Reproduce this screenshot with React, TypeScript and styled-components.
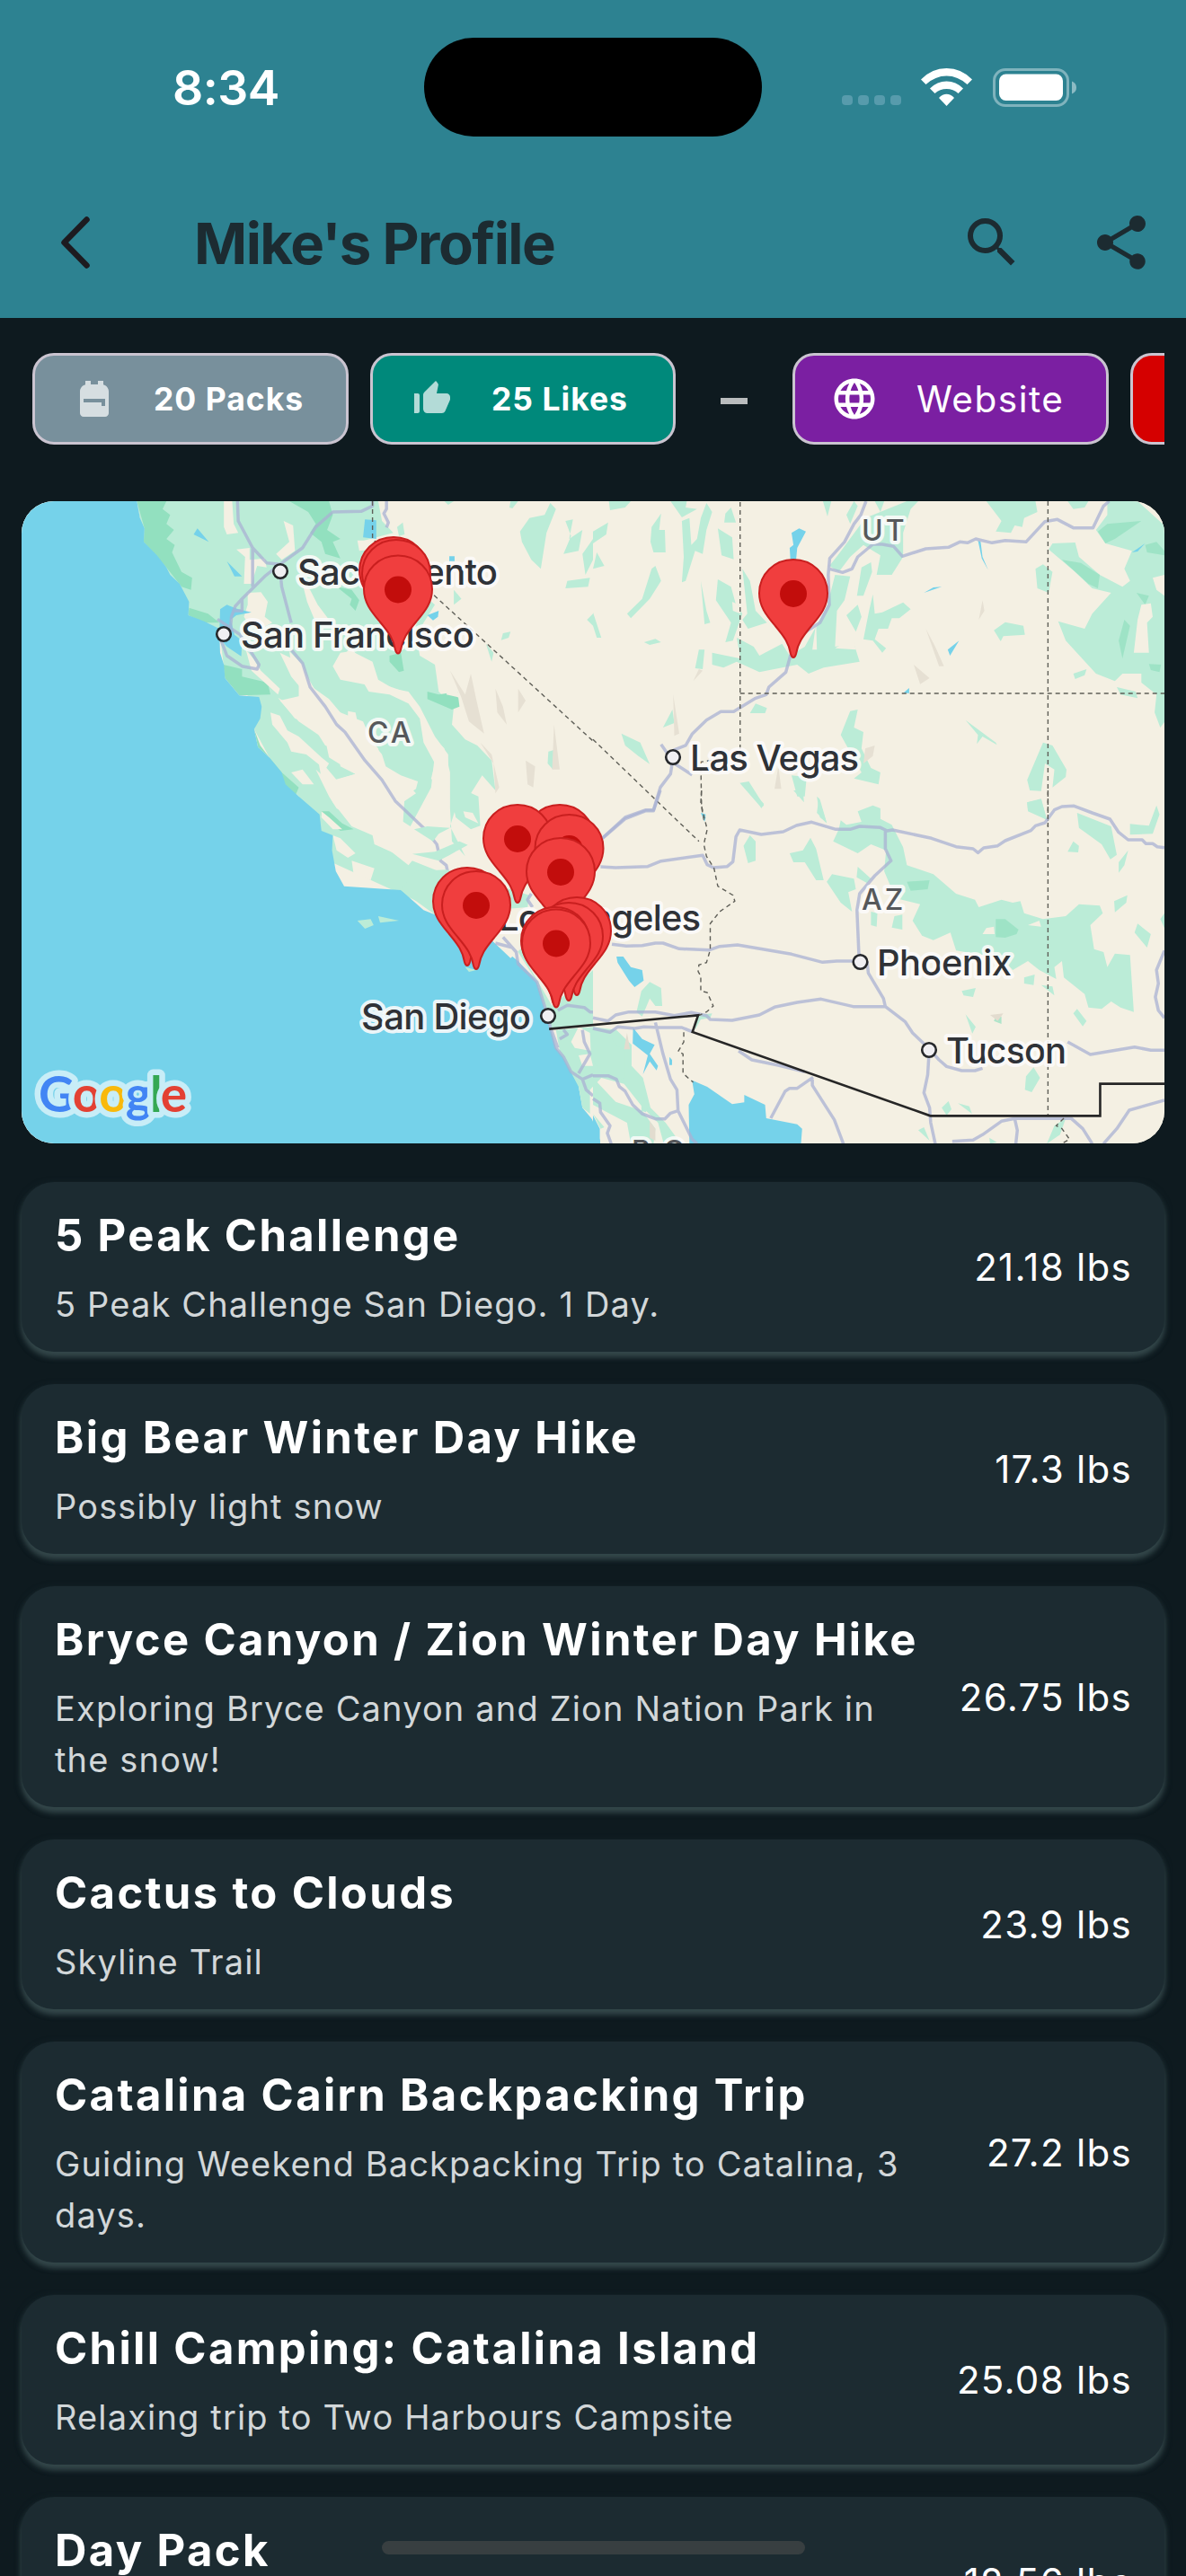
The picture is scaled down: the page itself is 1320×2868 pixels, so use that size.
import React, { FC, ReactNode } from "react"
import styled, { createGlobalStyle } from "styled-components"
import { MdBackpack, MdLanguage, MdSearch, MdShare, MdThumbUpAlt } from "react-icons/md"

const GlobalStyle = createGlobalStyle`
  * {
    box-sizing: border-box;
  }

  body {
    margin: 0;
    background: #0e1a1f;
    font-family: Inter, "Liberation Sans", sans-serif;
  }

  p, h1, h2 {
    margin: 0;
  }
`

const Screen = styled.div`
  position: relative;
  width: 1320px;
  height: 2868px;
  overflow: hidden;
  background: #0e1a1f;
`

const Header = styled.header`
  height: 354px;
  background: #2d8291;
`

const StatusBar = styled.div`
  display: grid;
  grid-template-columns: 472px 376px 1fr;
  height: 186px;
  padding-top: 42px;
`

const Clock = styled.div`
  height: 110px;
  padding: 1px 0 0 192px;
  line-height: 110px;
  font-size: 53.5px;
  font-weight: 570;
  letter-spacing: -0.5px;
  color: #fff;
`

const Island = styled.div`
  height: 110px;
  border-radius: 55px;
  background: #000;
`

const Indicators = styled.div`
  display: flex;
  align-items: center;
  height: 110px;
  padding-left: 89px;
`

const SignalDots = styled.div`
  display: flex;
  gap: 6.5px;
  margin-top: 29px;
  margin-right: 22px;
`

const SignalDot = styled.span`
  width: 11.5px;
  height: 11px;
  border-radius: 4px;
  background: #579bac;
`

const AppBar = styled.div`
  display: flex;
  align-items: center;
  height: 168px;
  padding: 0 36px 0 64px;
  color: #1c2b31;
`

const AppBarTitle = styled.h1`
  flex: 1;
  margin-left: 112px;
  padding-top: 2px;
  font-size: 63.5px;
  font-weight: 700;
  letter-spacing: -1.5px;
  line-height: 84px;
`

const Actions = styled.div`
  display: flex;
  gap: 72px;
`

const ChipRow = styled.div`
  display: flex;
  align-items: center;
  height: 204px;
  margin-right: 24px;
  padding: 0 0 24px 36px;
  overflow: hidden;
`

const Chip = styled.div<{ $color: string; $width: number; $pad?: number }>`
  display: flex;
  flex-shrink: 0;
  align-items: center;
  gap: 42px;
  width: ${({ $width }) => $width}px;
  height: 102px;
  margin-right: 24px;
  padding-left: ${({ $pad }) => $pad ?? 42}px;
  border: 3px solid #cac4d0;
  border-radius: 24px;
  background: ${({ $color }) => $color};
  color: #fff;

  svg {
    flex-shrink: 0;
  }
`

const ChipLabel = styled.span<{ $large?: boolean }>`
  font-size: ${({ $large }) => ($large ? 40.5 : 35.5)}px;
  font-weight: ${({ $large }) => ($large ? 430 : 650)};
  letter-spacing: ${({ $large }) => ($large ? 1.5 : 1)}px;
  white-space: nowrap;
`

const Divider = styled.div`
  flex-shrink: 0;
  width: 30px;
  height: 7px;
  margin: 4px 50px 0 26px;
  background: #b9bcbd;
`

const MapCard = styled.div`
  height: 715px;
  margin: 0 24px 43px;
  border-radius: 36px;
  overflow: hidden;
  background: #f4f0e3;

  svg {
    display: block;
  }
`

const List = styled.div`
  display: flex;
  flex-direction: column;
  gap: 36px;
  padding: 0 24px;
`

const PackCard = styled.div`
  display: flex;
  align-items: center;
  gap: 40px;
  flex-shrink: 0;
  padding: 24px 36px 24px 37px;
  border-radius: 36px;
  background: #1c2b31;
  box-shadow: 0 6px 6px #34474a, 0 3px 9px #1e2f34;
`

const PackInfo = styled.div`
  flex: 1;
  min-width: 0;
`

const PackTitle = styled.h2`
  margin-bottom: 12px;
  font-size: 49px;
  font-weight: 700;
  letter-spacing: 2.35px;
  line-height: 72px;
  white-space: nowrap;
  color: #fff;
`

const PackNote = styled.p`
  max-width: 960px;
  font-size: 38px;
  line-height: 57px;
  letter-spacing: 1.15px;
  color: #d2d7d9;
`

const PackWeight = styled.span`
  font-size: 42px;
  font-weight: 430;
  letter-spacing: 1.3px;
  white-space: nowrap;
  color: #fff;
`

const HomeIndicator = styled.div`
  position: absolute;
  bottom: 24px;
  left: 425px;
  width: 471px;
  height: 15px;
  border-radius: 8px;
  background: #383f41;
`

const WATER = "#75d2ea"
const GREEN = "#bbecd7"
const FOREST = "#92e0bf"
const LAND = "#f4f0e3"

// The map is traced in four quarters, each one with its own grid of units.
const Quarter: FC<{ x: number; y: number; children: ReactNode }> = ({ x, y, children }) => (
  <g transform={`translate(${x} ${y}) scale(0.42092 0.33333)`}>{children}</g>
)

const Road: FC<{ d: string }> = ({ d }) => (
  <path d={d} fill="none" stroke="#a9b2d3" strokeOpacity={0.75} strokeWidth={3.5} strokeLinejoin="round" vectorEffect="non-scaling-stroke" />
)

const Border: FC<{ d: string }> = ({ d }) => (
  <path d={d} fill="none" stroke="#5f5f58" strokeWidth={1.4} strokeDasharray="5 4" vectorEffect="non-scaling-stroke" />
)

const cities = [
  { name: "Sacramento", x: 331, y: 651, width: 223, dot: [312, 636] },
  { name: "San Francisco", x: 268, y: 721, width: 260, dot: [249, 706] },
  { name: "Las Vegas", x: 768, y: 858, width: 188, dot: [749, 843] },
  { name: "Los Angeles", x: 555, y: 1036, width: 225 },
  { name: "Phoenix", x: 976, y: 1086, width: 150, dot: [957.5, 1071] },
  { name: "San Diego", x: 402, y: 1146, width: 189, dot: [610, 1131] },
  { name: "Tucson", x: 1053, y: 1184, width: 134, dot: [1034, 1169] },
]

const states = [
  { name: "CA", x: 409, y: 827 },
  { name: "UT", x: 959, y: 602 },
  { name: "AZ", x: 959, y: 1013 },
  { name: "B.C.", x: 703, y: 1293 },
]

const pins = [
  [438, 597], [441, 600], [443, 617.5], [883, 622],
  [623, 895], [576, 895], [633.5, 906], [624, 932],
  [520, 965], [530, 969],
  [642, 998], [633, 1004], [618, 1009], [619, 1011.5],
]

const logo = [
  ["G", "#4285f4"], ["o", "#e34133"], ["o", "#f9b90b"], ["g", "#4285f4"], ["l", "#34a853"], ["e", "#e34133"],
]

const TripMap: FC = () => (
  <svg width={1272} height={715} viewBox="24 558 1272 715">
    <rect x={24} y={558} width={1272} height={715} fill={LAND} />

    {/* north west: the bay, the valley and the Sierra */}
    <Quarter x={0} y={540}>
      <path fill={GREEN} d="M362 54H1000L1010 120L1040 160L950 190L1000 240L1150 400L1100 500L1110 570L1150 600L1160 690L1200 740L1195 800L1230 850L1262 870L1300 920L1310 1020L1275 970L1235 1050L1205 1080L1190 1140L1230 1240L1195 1190L1190 1080L1190 960L1175 880L1130 820L1100 760L1070 690L1000 660L960 610L930 540L880 605L900 650L1100 700L1120 830L1150 900L1140 1010L1085 1140L1060 1120L1065 1060L1100 1030L1070 990L1010 940L1000 880L960 820L900 760L860 720L840 700L790 590L740 560L770 640L810 700L740 720L790 790L860 850L870 910L940 965L890 985L840 910L850 980L880 1060L930 1140L985 1170L990 1200L1060 1240L1160 1290L1190 1440L860 1250L790 1040L755 1000L712 910L672 815L692 740L595 645L580 480L498 435L380 190Z" />
      <path fill={FOREST} d="M362 54H440L430 80L450 100L440 130L460 150L440 180L462 200L455 225L480 290L508 310L505 350L480 340L440 275L380 190L382 145ZM765 54H870L880 100L865 150L900 180L880 190L900 245L860 230L850 190L820 160L835 130L815 90ZM590 600L640 615L640 640L708 660L715 700L633 703L595 645ZM672 815L688 870L712 910L745 960L790 1010L780 1040L740 980L712 910L682 875ZM890 340L930 350L950 385L940 420L925 400L930 380ZM1030 570L1060 560L1068 620L1055 625L1030 590ZM1130 690L1160 700L1210 690L1215 740L1195 750L1130 715ZM850 1090L870 1090L905 1130L935 1150L900 1155L850 1105ZM500 410L550 430L580 460L540 460L498 435Z" />
      <path fill={LAND} d="M592 54H614L618 130L630 160L600 165L592 140ZM750 120L775 135L780 220L745 250L730 230L765 190ZM625 215L660 210L660 250L700 245L705 275L680 270L665 330L645 330L648 240ZM945 185L980 185L985 215L950 220ZM655 360L690 358L708 390L700 440L720 460L690 480L655 460L645 440L655 400ZM800 330L820 350L840 400L870 450L830 445L812 390ZM650 550L670 580L690 620L740 680L735 700L700 660L665 620ZM765 555L800 600L820 670L870 715L900 760L960 790L985 860L1010 900L1020 940L1060 970L1105 990L1100 1015L1070 1040L1065 1140L1050 1140L1020 1170L1100 1240L1080 1270L1000 1190L985 1160L930 1110L890 1080L870 1040L835 950L870 990L940 965L900 940L895 880L860 870L830 810L810 760L790 710L790 650L770 600ZM715 760L740 770L760 820L790 840L850 910L870 930L860 950L810 900L770 890L760 860L720 800ZM735 710L760 730L795 735L810 790L780 780ZM770 960L800 950L830 1000L800 1000ZM880 605L900 560L930 555L985 590L1000 650L1040 680L1080 690L1110 740L1150 840L1185 900L1188 1140L1160 1240L1100 1230L1120 1120L1150 1000L1140 980L1150 930L1120 860L1110 780L1080 730L1030 700L975 690L940 615ZM1180 610L1200 640L1180 700L1215 710L1200 640L1170 590ZM920 755L940 760L945 790L920 780ZM850 1090L870 1110L905 1150L880 1150L850 1110ZM880 1170L900 1180L940 1230L920 1245L890 1220ZM930 1255L990 1280L980 1320L935 1300Z" />
      <path fill={WATER} d="M0 0L362 0V54L370 110L382 145L380 190L415 235L440 275L450 300L475 330L500 390L498 435L540 455L580 480L582 560L592 600L595 645L633 703L685 708L692 740L688 780L672 815L682 875L712 910L745 960L755 1000L790 1040L845 1100L850 1155L880 1170L878 1220L888 1290L910 1340L1060 1353L1120 1420L1150 1435L1300 1520L1370 1590L1420 1660L1440 1740L1455 1810L1470 1880L1495 1920L1520 1970L1540 1990L1530 2010L1540 2080L1587 2150V2250H0Z" />
      <path fill={WATER} d="M522 145L552 190L512 165ZM600 255L640 305L620 305ZM965 115L995 118V180L960 175ZM582 415L600 400L630 415L665 425L625 435L610 450L620 500L640 520L638 572L600 540L580 510ZM1130 435L1160 420L1158 440L1145 452ZM1188 238H1202V254H1188Z" />
      <path fill={GREEN} d="M1050 140L1065 125L1070 165L1055 170ZM1175 54H1200L1185 66ZM1350 54H1370L1355 78L1347 75ZM1375 155L1400 110L1440 100L1455 60L1470 80L1445 160L1430 280L1405 250L1380 190ZM1495 120L1515 115L1505 180L1540 150L1530 220L1490 230L1510 170ZM1330 495L1350 490L1345 510L1325 518ZM1285 530L1305 560L1300 590ZM1200 350L1220 380L1200 400ZM1450 890L1465 885L1462 950L1448 930ZM1500 320L1560 310L1555 340L1495 345ZM1540 230L1568 180V250L1548 300ZM1552 450L1568 430V470Z" />
      <path fill="#e6e0d3" d="M1190 620L1230 700L1245 630L1260 720L1280 830L1240 790L1220 710ZM1310 680L1330 740L1340 800L1315 760ZM1370 680L1390 720L1370 760ZM1270 860L1300 900L1320 1010L1310 1030L1305 930ZM1390 920L1415 940L1410 1010L1395 1000ZM1465 800L1480 950H1460Z" />
      <Road d="M628 54L630 120L668 210L668 340M668 210L705 260L740 265L800 210L835 140L880 90L955 88L985 70V54M740 265L700 305L640 380L622 405L612 440L608 500L585 520L600 570L640 605L680 615L685 600L665 560L635 500L575 448M640 380L640 420L620 420M741 290L745 340L770 460M770 550L800 595L820 675L860 740L890 800L912 825L965 920L1010 985L1045 1055L1120 1145L1155 1200L1165 1255L1180 1270L1185 1300M1022 54V80L1015 95L1027 125L1022 142" />
      <Border d="M985 54V180L1568 855" />
    </Quarter>

    {/* north east: Nevada and Utah */}
    <Quarter x={660} y={540}>
      <path fill={GREEN} d="M42 54H100L85 75L45 84ZM0 155L40 125L35 165L0 195ZM155 140L180 95L175 150L190 150L192 225L160 225L152 190ZM205 54H248L245 75L275 80L235 108ZM235 120L255 110L260 200L275 180L285 110L300 60L315 90L300 150L290 230L270 220L245 320L235 325L240 240ZM350 95L365 75L378 125L347 125ZM330 145L368 175L372 248L340 235ZM10 225L30 270L0 280ZM155 280L165 270L180 320L150 380L100 445L90 430L130 380ZM0 425L22 510L10 510L0 470ZM285 320L300 420L310 460L295 465ZM330 315L365 340L378 400L395 430L370 520L350 525L365 460L325 385ZM395 280L415 320L430 420L460 460L410 480L395 450L408 430ZM135 525L165 514L180 525L150 534ZM280 550L295 550L290 615L270 612ZM608 54H630L620 105ZM690 54L700 70L680 130L670 100ZM745 54H770L760 90ZM830 54H860L840 80L820 160V240L790 300H750L760 235L715 200L680 240L650 290L625 270L650 230L720 110ZM1040 54H1170L1175 90L1140 110L1135 140L1115 135L1105 160L1065 155L1080 120ZM1255 54H1310L1300 75L1270 80ZM1360 54H1440L1568 200V700L1500 810L1485 760L1490 700L1450 660V630H1400L1380 655L1330 630L1250 520L1230 455L1300 480L1320 430L1370 360L1320 345L1275 290L1205 215L1215 195L1275 192L1285 240L1340 300L1400 340L1420 320L1405 280L1425 220L1355 195L1330 150L1360 100ZM1170 280L1190 265L1215 290L1205 360L1175 345ZM710 275L735 258L738 290L715 370L698 370ZM640 300L680 305L665 385L645 420L640 540L690 530L705 590L610 610L570 630L540 600L440 625L380 590L345 610L315 600V560L390 580L380 510L425 540L440 570L500 530L520 570L560 540L600 450L620 400ZM670 435L700 400L710 440L695 490ZM740 365L745 430L765 425L820 392L840 415L810 445L790 445L780 480L755 480L745 515L775 545L765 560L740 520L715 515L730 420ZM1060 485L1090 458L1138 470L1142 500L1085 505L1078 522ZM1270 630L1305 615L1300 635L1275 648ZM1385 675L1435 690L1440 712L1395 700ZM210 750L215 795L185 810ZM415 762L430 730L460 745L455 762ZM75 830L125 860L150 932L120 905L85 870ZM680 755L700 750L690 810L715 825L710 880L735 945L760 960L755 1000L690 980L710 960L655 835ZM985 785L1065 860L1068 868L1030 840L1015 865L1018 835ZM1190 860L1215 870L1252 950L1250 975L1215 1010L1220 950L1195 930L1185 1022L1155 1020L1148 985ZM388 995L412 990L452 1070L445 1078ZM525 970L565 975L560 1040L540 1040ZM597 1045L618 1130L592 1095ZM1148 1060L1185 1050L1200 1118L1150 1085Z" />
      <path fill={FOREST} opacity={0.7} d="M1240 250L1290 260L1340 300L1335 345L1310 330ZM1335 155L1360 130L1450 120L1380 180L1355 195ZM1460 200L1490 190L1511 220V235L1465 225ZM1437 360L1470 370L1460 400ZM1470 598L1502 600L1498 625L1475 618ZM1405 450L1420 470L1400 580L1390 520Z" />
      <path fill={LAND} d="M1450 400L1475 395L1480 440L1465 460L1470 560L1430 560L1440 450ZM1480 310L1511 300V370L1490 350ZM368 390L385 400L390 430L370 420ZM590 460L580 550H592ZM640 545L660 530L690 525L695 550Z" />
      <path fill={WATER} d="M525 160L545 145L563 155L540 210L537 250H522L520 210L530 200ZM1018 185L1025 190L1030 240L1045 284L1028 245ZM875 360L900 342L922 340ZM938 550L968 520L944 570ZM1425 225L1460 195L1440 222ZM820 695L836 678V695ZM285 1095L298 1100L295 1125Z" />
      <path fill="#e6e0d3" d="M880 480L905 540L928 605L915 605ZM848 600L890 645L865 665ZM1030 385L1035 420L1020 450ZM212 700L228 830L215 838ZM265 655L280 615L290 620ZM720 880L745 870L740 905L715 930ZM490 940L498 1015H480Z" />
      <Road d="M722 54L708 100L690 130L665 190L626 245L622 300L625 400L600 460L550 500L522 570L510 625L465 675L458 700L430 712L372 757H338L300 785L262 832L245 870L215 885L205 965L178 1010L160 1085L140 1085L85 1110L20 1185M625 280L660 292L685 280L700 240L740 198H765L795 205L818 238L880 213L940 208L970 190L990 193L1012 180L1055 193L1090 185L1145 190L1195 122L1228 115L1270 143H1322L1350 70L1365 54M180 866L215 930L262 968" />
      <Border d="M389 57V905L285 925L287 1075L295 1130M389 696H1511M1203 54V1140M0 850L280 1190" />
    </Quarter>

    {/* south west: the coast down to Baja */}
    <Quarter x={0} y={880}>
      <path fill={GREEN} d="M945 435L980 430L988 450L965 462ZM1000 420L1055 435L1005 442ZM1230 590L1260 600L1240 606ZM1095 130L1130 120L1190 125L1160 145L1145 170ZM1090 212L1150 205L1215 170L1237 182L1190 215L1160 235ZM1190 0L1205 90L1245 130L1270 118L1265 20L1230 0ZM1100 270L1180 265L1400 350L1395 390L1150 415L1060 333ZM1340 480L1380 470L1400 590L1460 720L1568 600V780L1455 795L1420 640Z" />
      <path fill={LAND} d="M1225 70L1250 75L1265 110L1230 90ZM1300 400L1420 400V480L1350 560L1300 500Z" />
      <path fill={GREEN} d="M1470 800L1568 790L1630 800L1670 850V920L1700 960L1720 1060L1760 1110L1800 1180H1660L1600 1120L1540 1060L1530 990L1480 870Z" />
      <path fill={LAND} d="M1510 840L1530 790L1560 810L1562 870L1520 860ZM1530 885L1560 880L1568 920L1540 920ZM1590 960L1650 980L1700 1060L1740 1110L1755 1180H1590L1560 1080L1560 1000Z" />
      <Road d="M1405 345L1395 365L1408 390M1330 490L1365 540L1370 580L1420 640L1440 720L1455 790L1470 860L1490 890L1510 940L1540 965L1568 950M1310 510L1355 525M1475 735L1500 718L1545 725L1560 740H1568M1455 790L1475 860M1480 830L1500 815L1490 800M1540 800L1545 840L1560 880L1530 945M1540 965L1550 1000L1568 1020" />
    </Quarter>

    {/* south east: Arizona, Sonora and the gulf */}
    <Quarter x={660} y={880}>
      <path fill={GREEN} d="M0 790L40 810L60 850L85 870V960L60 970L20 940L0 900ZM0 960L60 1040L130 1070L165 1130L160 1180H100L90 1110L30 1070L0 1050ZM0 1080L30 1125L20 1130ZM128 1015L148 1050L140 1075L128 1070ZM650 130L655 100L670 115L710 105L700 70L740 50L760 60V95L790 115L820 190L830 250L900 280L960 345L1010 365L1020 390L1080 365L1110 375L1130 370L1140 410L1190 430L1250 420L1285 380L1340 385L1348 410L1315 450L1325 530L1350 540L1360 590L1380 545L1420 550L1430 740L1395 725L1370 705L1345 730L1310 725L1300 680L1245 625L1240 570L1220 590L1225 630L1180 600L1150 570L1110 600L1080 560L960 535L945 475L900 500L870 485L845 435L865 380L800 360L770 270L775 200L735 180L700 210L635 170ZM520 210L555 200L575 158L590 195L610 300L590 300L560 240L530 240ZM398 185L415 150L430 170V235L410 243ZM420 0L452 45L445 60ZM592 20L600 30L618 108L600 90ZM618 305L632 280L690 295L695 330L675 340L685 405L655 375ZM700 255L735 295L725 310L697 290ZM735 405L752 410L750 455L735 450ZM797 420L818 415V465L790 458ZM1148 40L1185 28L1200 98L1150 70ZM1280 75L1370 120L1385 215L1368 230L1345 180L1285 125ZM1270 170L1285 185L1283 207L1255 205ZM1490 50L1498 80L1480 145L1420 148V112L1470 118ZM1415 200L1405 250L1390 275V240ZM1378 370L1413 350L1410 375L1380 407ZM1440 445L1475 480L1465 525L1432 475ZM1500 430L1511 410V460ZM975 670L1012 660L1005 690L980 685ZM1140 625L1168 615L1165 650L1140 645ZM1185 650L1215 655L1220 685ZM1280 730L1305 770L1295 788L1270 745ZM985 748L1012 790L1003 812ZM1145 955L1165 925L1182 960L1160 1008L1142 1000ZM922 1060L940 1038L948 1065L935 1085ZM965 1045L995 1055L1002 1080ZM860 1135L875 1125L890 1170ZM1220 1120L1250 1095L1235 1150L1200 1180ZM1048 1160L1068 1175L1050 1180ZM128 670L150 640L180 660L183 720H165L150 695L130 755L115 740ZM275 750L315 745L310 760L285 765L270 800ZM530 0H555L558 40Z" />
      <path fill={FOREST} opacity={0.7} d="M1065 430L1090 430L1125 465L1120 480L1090 492L1065 490ZM830 305L890 300L885 330L840 335ZM1065 755H1080V780L1060 770Z" />
      <path fill={LAND} d="M1040 460L1060 455L1062 480L1030 480ZM1150 450L1180 435L1185 455ZM1322 445L1345 460L1322 470Z" />
      <path fill={WATER} d="M62 555H80L100 590L130 600L134 635L110 657L95 635L65 575ZM106 793L130 830L163 850L150 880L172 920L168 935L150 905L132 948L145 885L105 845ZM202 890L209 900V917H202ZM288 75L298 90L295 102ZM262 968L302 990L368 1048L400 1042V1017L455 1050L458 1095L540 1115L553 1130L550 1180H255L253 1050L268 1015ZM0 1085L18 1130V1180H0Z" />
      <path fill="#e2dccf" d="M90 810L98 865L82 865ZM150 1105L165 1130L165 1170L150 1160ZM1050 750L1085 745L1070 770Z" />
      <Road d="M25 160L85 95L140 68H160L178 0M20 255L60 258L145 254L180 236L290 217L302 248L318 258L355 254L370 238L378 155L388 132L445 147L503 138L538 117L578 106L642 130H680L705 120L760 124L778 135L792 132L895 160L960 188L1005 195L1018 208L1033 192L1070 185L1090 168L1158 134L1170 118L1195 108L1220 65L1240 54L1272 52L1320 75L1367 96L1390 140L1415 165H1452L1462 178H1480L1492 188L1511 191M773 135V195L788 235L745 285L705 345L698 400L703 545L725 575L728 610L768 695L773 722L825 772L845 810L888 862L915 900L935 922L975 936H1010L1030 928M50 514L88 520L130 518L165 510H185L228 529L308 533L335 521L382 516L525 547L607 574L645 570H688M0 760L40 770L60 750L95 740H165L215 752L260 742L300 752L310 765L368 768L440 750L480 724L540 708L603 697L688 722H773M0 795L45 808L65 790L110 795L135 790L175 792H235L262 806M165 775L185 880L205 965L222 1000L225 1070L262 1165L275 1180M0 953H40L62 965L70 990L85 1005L105 1050L130 1080L165 1097H190L205 1078L225 1070M0 1030L18 1045L20 1075L45 1120L38 1145L48 1180M385 870L420 900L490 918L560 940M582 958L540 995H520L508 1005L470 1095M580 965V985L638 1100L662 1180M888 890L885 950L875 1010L890 1060L893 1110L905 1180M1255 840L1315 882L1432 857L1475 868H1511M950 1172L1005 1168L1030 1150L1080 1105L1115 1096H1265L1295 1130L1320 1180M1115 1096L1122 1135L1118 1180M1350 1180L1385 1130L1418 1068L1511 1035M1511 535L1490 600L1495 645L1487 690L1495 735L1511 760" />
      <Border d="M287 0L285 40L292 80L302 130L293 180L300 220L320 260L330 320L370 350L375 370L335 405L310 445V533L300 575L280 583L278 605L285 620V670L302 675L318 720L300 740L280 752M240 808V840L225 872L238 880V945L265 975M1203 0V1085M1245 1095L1225 1120L1240 1130L1260 1165L1240 1180" />
      <path fill="none" stroke="#262626" strokeWidth={2.6} vectorEffect="non-scaling-stroke" d="M-116 797L278 751L263 807L892 1087H1341V980H1511" />
    </Quarter>

    <g fontFamily="Inter, 'Liberation Sans', sans-serif" fontWeight={500} stroke="#fcfbfa" strokeOpacity={0.9} strokeWidth={8} strokeLinejoin="round" paintOrder="stroke">
      {cities.map(({ name, x, y, width }) => (
        <text key={name} x={x} y={y} textLength={width} fontSize={40} fill="#2f3237">{name}</text>
      ))}
      {states.map(({ name, x, y }) => (
        <text key={name} x={x} y={y} fontSize={32} letterSpacing={3} fill="#56585b">{name}</text>
      ))}
    </g>
    {cities.map(({ name, dot }) => dot && (
      <circle key={name} cx={dot[0]} cy={dot[1]} r={7.8} fill="#f0eff2" stroke="#26282b" strokeWidth={2.6} />
    ))}

    {pins.map(([x, y]) => (
      <g key={`${x}-${y}`} transform={`translate(${x} ${y})`}>
        <path d="M0 1C-21 1 -38 17 -38 38.500C-38 54 -29 64 -20 75C-10 87 -5 94 -3 106Q-2 110 0 110Q2 110 3 106C5 94 10 87 20 75C29 64 38 54 38 38.500C38 17 21 1 0 1Z" fill="#f03e3e" stroke="#c91f1f" strokeWidth={2} />
        <circle cy={39} r={15} fill="#c20d0c" />
      </g>
    ))}

    <text x={43} y={1238} textLength={165} fontFamily="Lato, sans-serif" fontSize={55} fontWeight={700} stroke="#c8edf7" strokeWidth={13} strokeLinejoin="round" paintOrder="stroke">
      {logo.map(([letter, color], i) => (
        <tspan key={i} fill={color}>{letter}</tspan>
      ))}
    </text>
  </svg>
)

const packs = [
  { title: "5 Peak Challenge", note: "5 Peak Challenge San Diego. 1 Day.", weight: "21.18 lbs" },
  { title: "Big Bear Winter Day Hike", note: "Possibly light snow", weight: "17.3 lbs" },
  { title: "Bryce Canyon / Zion Winter Day Hike", note: "Exploring Bryce Canyon and Zion Nation Park in the snow!", weight: "26.75 lbs" },
  { title: "Cactus to Clouds", note: "Skyline Trail", weight: "23.9 lbs" },
  { title: "Catalina Cairn Backpacking Trip", note: "Guiding Weekend Backpacking Trip to Catalina, 3 days.", weight: "27.2 lbs" },
  { title: "Chill Camping: Catalina Island", note: "Relaxing trip to Two Harbours Campsite", weight: "25.08 lbs" },
  { title: "Day Pack", note: "", weight: "12.56 lbs" },
]

const App: FC = () => {
  return (
    <Screen>
      <GlobalStyle />
      <Header>
        <StatusBar>
          <Clock>8:34</Clock>
          <Island />
          <Indicators>
            <SignalDots>
              <SignalDot />
              <SignalDot />
              <SignalDot />
              <SignalDot />
            </SignalDots>
            <svg width={174} height={43} viewBox="0 0 174 43">
              <g fill="#fff">
                <path d="M0 12.500Q12 0 28.500 0T57 12.500L51.500 18Q41 8.500 28.500 8.500T5.500 18Z" />
                <path d="M10 22.500Q18 14.500 28.500 14.500T47 22.500L41.500 28Q36 23 28.500 23T15.500 28Z" />
                <path d="M20 33Q24 28.800 28.500 28.800T37 33L28.500 42Z" />
              </g>
              <rect x={81.500} y={1.500} width={82} height={40} rx={12.500} fill="none" stroke="#7fb3bd" strokeWidth={3} />
              <rect x={87} y={6.500} width={71} height={29.500} rx={7.500} fill="#fff" />
              <path d="M168 14.500Q173 16.500 173 21.500T168 28.500Z" fill="#8cbbc4" />
            </svg>
          </Indicators>
        </StatusBar>
        <AppBar>
          <svg width={40} height={60} viewBox="0 0 40 60">
            <path d="M32.500 4.500L7.500 30L32.500 55.500" fill="none" stroke="#1d1b20" strokeWidth={6.500} strokeLinecap="round" strokeLinejoin="round" />
          </svg>
          <AppBarTitle>Mike's Profile</AppBarTitle>
          <Actions>
            <MdSearch size={72} />
            <MdShare size={72} />
          </Actions>
        </AppBar>
      </Header>

      <ChipRow>
        <Chip $color="#78909c" $width={352}>
          <MdBackpack size={48} opacity={0.7} />
          <ChipLabel>20 Packs</ChipLabel>
        </Chip>
        <Chip $color="#00897b" $width={340}>
          <MdThumbUpAlt size={48} opacity={0.7} />
          <ChipLabel>25 Likes</ChipLabel>
        </Chip>
        <Divider />
        <Chip $color="#7b1fa2" $width={352} $pad={39}>
          <MdLanguage size={54} />
          <ChipLabel $large>Website</ChipLabel>
        </Chip>
        <Chip $color="#d50000" $width={352} />
      </ChipRow>

      <MapCard>
        <TripMap />
      </MapCard>

      <List>
        {packs.map(({ title, note, weight }) => (
          <PackCard key={title}>
            <PackInfo>
              <PackTitle>{title}</PackTitle>
              <PackNote>{note || "\u00a0"}</PackNote>
            </PackInfo>
            <PackWeight>{weight}</PackWeight>
          </PackCard>
        ))}
      </List>
      <HomeIndicator />
    </Screen>
  )
}
export default App
